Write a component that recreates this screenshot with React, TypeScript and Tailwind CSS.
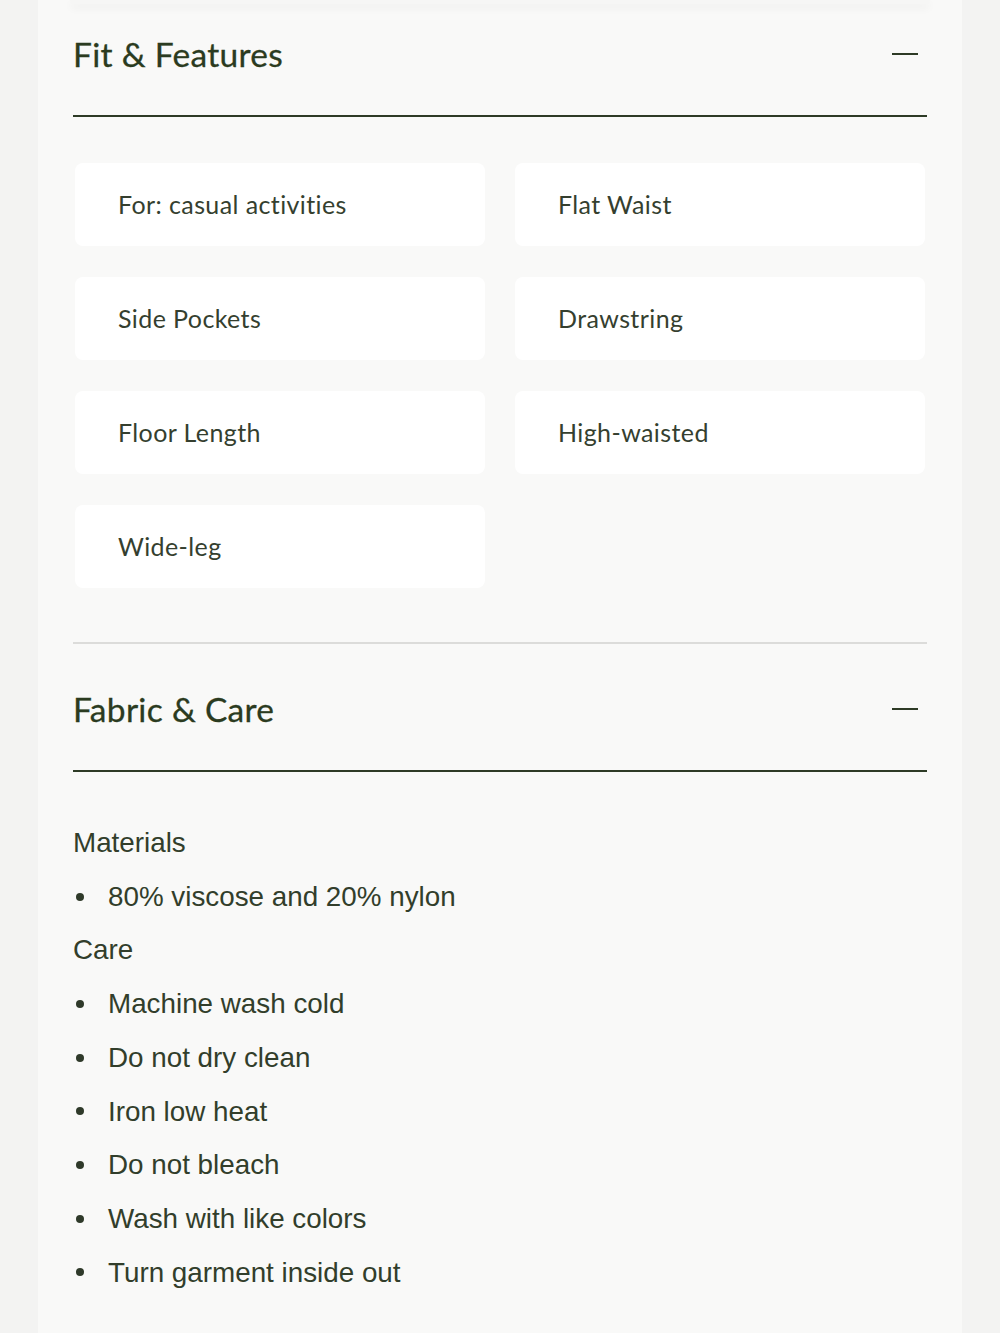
import React from "react";

const features = [
  "For: casual activities",
  "Flat Waist",
  "Side Pockets",
  "Drawstring",
  "Floor Length",
  "High-waisted",
  "Wide-leg",
];

const care = [
  "Machine wash cold",
  "Do not dry clean",
  "Iron low heat",
  "Do not bleach",
  "Wash with like colors",
  "Turn garment inside out",
];

function SectionHeader({ title }: { title: string }) {
  return (
    <div className="flex items-center justify-between border-b-2 border-[#2e3b26] pb-[41px]">
      <h2 className="font-['Lato',sans-serif] text-[33.5px] leading-[40px] text-[#2b3b20] tracking-[0.3px] [-webkit-text-stroke:0.3px_#2b3b20]">
        {title}
      </h2>
      <span className="mr-[9px] block h-[2px] w-[26px] bg-[#2e3b26]" />
    </div>
  );
}

function Bullet({ text }: { text: string }) {
  return (
    <li className="flex items-center">
      <span className="ml-[3px] mr-[24px] block size-[8px] rounded-full bg-[#2f3a2a]" />
      {text}
    </li>
  );
}

export default function App() {
  return (
    <div className="min-h-[1333px] bg-[#f3f3f2]">
      <div className="mx-[38px] min-h-[1333px] bg-[#f9f9f8] px-[35px]">
        <div className="-mx-[3px] h-[4px] rounded-b-md bg-[#f6f6f5] shadow-[0_4px_8px_rgba(0,0,0,0.06)]" />

        <section className="pt-[30px]">
          <SectionHeader title="Fit & Features" />
          <div className="mt-[46px] grid grid-cols-2 gap-x-[30px] gap-y-[31px] px-[2px]">
            {features.map((f) => (
              <div
                key={f}
                className="flex h-[83px] items-center rounded-[8px] bg-white pl-[43px] font-['Lato',sans-serif] text-[25px] text-[#353f2f] tracking-[0.4px]"
              >
                {f}
              </div>
            ))}
          </div>
          <div className="mt-[54px] h-[2px] bg-[#dcdcda]" />
        </section>

        <section className="pt-[45px]">
          <SectionHeader title="Fabric & Care" />
          <div className="mt-[44px] font-['Liberation_Sans',Arial,sans-serif] text-[27.8px] leading-[53.7px] text-[#323e2b]">
            <p>Materials</p>
            <ul>
              <Bullet text="80% viscose and 20% nylon" />
            </ul>
            <p>Care</p>
            <ul>
              {care.map((c) => (
                <Bullet key={c} text={c} />
              ))}
            </ul>
          </div>
        </section>
      </div>
    </div>
  );
}
